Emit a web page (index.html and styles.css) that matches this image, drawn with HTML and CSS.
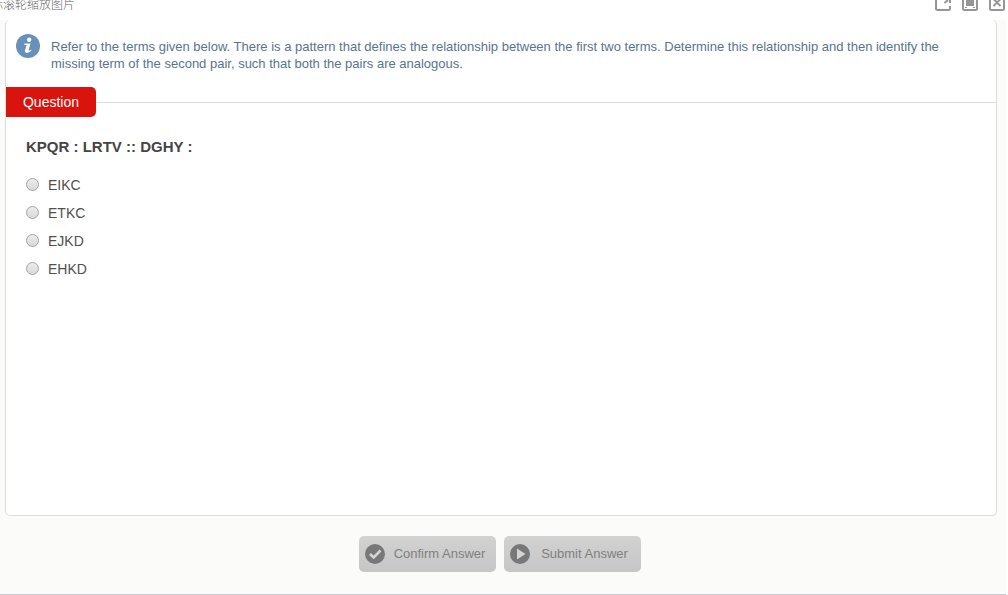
FILE: index.html
```html
<!DOCTYPE html>
<html lang="en">
<head>
<meta charset="utf-8">
<title>Question</title>
<link rel="stylesheet" href="styles.css">
</head>
<body>
<header class="topbar">
  <span class="hint" lang="zh-CN">标滚轮缩放图片</span>
  <div class="tools">
    <button class="tool" type="button" aria-label="Open in new window">
      <svg width="18" height="12" viewBox="0 0 18 12" fill="none" stroke="#969696" stroke-width="2"><path d="M2 0V8.500Q2 10 3.500 10H14.500Q16 10 16 8.500V6M10.500 3L14 0M16 0V3"/></svg>
    </button>
    <button class="tool" type="button" aria-label="Actual size">
      <svg width="18" height="12" viewBox="0 0 18 12" fill="none" stroke="#969696" stroke-width="2"><path d="M2 0V8.500Q2 10 3.500 10H14.500Q16 10 16 8.500V0"/><path d="M5 0H13V6H5Z" fill="#969696" stroke="none"/><path d="M4 7.500H6M12 7.500H14" stroke-width="1"/></svg>
    </button>
    <button class="tool" type="button" aria-label="Close">
      <svg width="18" height="12" viewBox="0 0 18 12" fill="none" stroke="#969696" stroke-width="2"><path d="M2 0V8.500Q2 10 3.500 10H14.500Q16 10 16 8.500V0M5.500 -1L12.500 6M12.500 -1L5.500 6"/></svg>
    </button>
  </div>
</header>
<main class="stage">
  <form class="quiz">
    <section class="card">
      <div class="info">
        <svg class="info-icon" width="24" height="24" viewBox="0 0 24 24"><circle cx="12" cy="12" r="12" fill="#6790bb"/><circle cx="13.200" cy="5.800" r="2.200" fill="#fff"/><path d="M8.500 9.500H14.500L12.600 16.300Q12.500 17.200 15 15.700L15.500 16.500Q12.500 19.300 10 18.800Q8.500 18.300 9 16.500L10.600 11H8.300Z" fill="#fff"/></svg>
        <p class="info-text">Refer to the terms given below. There is a pattern that defines the relationship between the first two terms. Determine this relationship and then identify the missing term of the second pair, such that both the pairs are analogous.</p>
      </div>
      <div class="divider"><h1 class="tab">Question</h1></div>
      <fieldset class="question">
        <legend class="prompt">KPQR : LRTV :: DGHY :</legend>
        <label class="option"><input class="radio" type="radio" name="answer">EIKC</label>
        <label class="option"><input class="radio" type="radio" name="answer">ETKC</label>
        <label class="option"><input class="radio" type="radio" name="answer">EJKD</label>
        <label class="option"><input class="radio" type="radio" name="answer">EHKD</label>
      </fieldset>
    </section>
    <div class="actions">
      <button class="action" type="button">
        <svg width="20" height="20" viewBox="0 0 20 20"><circle cx="10" cy="10" r="10" fill="#787878"/><path d="M5 10L8.700 13.500L15.500 6.500" fill="none" stroke="#d4d4d4" stroke-width="2.600"/></svg>
        <span class="action-label">Confirm Answer</span>
      </button>
      <button class="action" type="button">
        <svg width="20" height="20" viewBox="0 0 20 20"><circle cx="10" cy="10" r="10" fill="#787878"/><path d="M7 4.500L15.500 10L7 15.500Z" fill="#d4d4d4"/></svg>
        <span class="action-label">Submit Answer</span>
      </button>
    </div>
  </form>
</main>
</body>
</html>
```
FILE: styles.css
```css
* {
  box-sizing: border-box;
}

body {
  margin: 0;
  min-height: 100vh;
  display: flex;
  flex-direction: column;
  background: #fff;
  font-family: "Liberation Sans", Arial, "Noto Sans CJK SC", sans-serif;
}

button {
  font: inherit;
  border: 0;
  cursor: pointer;
}

.topbar {
  display: flex;
  justify-content: space-between;
  align-items: flex-start;
  height: 20px;
  padding-right: 2px;
  overflow: hidden;
}

.hint {
  margin: -5px 0 0 -9px;
  font-family: "Noto Sans CJK SC", sans-serif;
  font-weight: 300;
  font-size: 12px;
  line-height: 18px;
  color: #666;
}

.tools {
  display: flex;
  gap: 9px;
}

.tool {
  display: block;
  padding: 0;
  background: none;
}

.tool svg {
  display: block;
}

.stage {
  flex: 1;
  display: flex;
  margin-right: 2px;
  padding: 0 9px 0 5px;
  background: #fbfbfa;
  border-bottom: 1px solid #cbcbcf;
}

.quiz {
  flex: 1;
  display: flex;
  flex-direction: column;
}

.card {
  flex: 1;
  background: #fff;
  border: 1px solid #dcdcdc;
  border-top: 0;
  border-radius: 5px;
}

.info {
  display: flex;
  gap: 11px;
  padding: 14px 40px 0 10px;
}

.info-icon {
  flex: none;
}

.info-text {
  margin: 4px 0 0;
  font-size: 13px;
  line-height: 17px;
  color: #57758d;
}

.divider {
  display: flex;
  align-items: center;
  margin-top: 15px;
}

.divider::after {
  content: "";
  flex: 1;
  height: 1px;
  background: #dcdcdc;
}

.tab {
  margin: 0;
  width: 90px;
  border-radius: 0 5px 5px 0;
  background: #d9130d;
  color: #fff;
  font-size: 14px;
  font-weight: 400;
  line-height: 30px;
  text-align: center;
}

.question {
  margin: 0;
  padding: 0 20px;
  border: 0;
}

.prompt {
  padding: 20px 0 14px;
  font-size: 15px;
  font-weight: 700;
  line-height: 20px;
  color: #444;
}

.option {
  display: flex;
  align-items: center;
  gap: 9px;
  width: max-content;
  height: 28px;
  font-size: 14px;
  color: #505050;
}

.radio {
  appearance: none;
  width: 13px;
  height: 13px;
  margin: 0 0 2px;
  border: 1px solid #a4a4a4;
  border-radius: 50%;
  background: linear-gradient(#ececec, #d9d9d9);
}

.radio:checked {
  background: radial-gradient(#505050 35%, #e4e4e4 40%);
}

.actions {
  display: flex;
  justify-content: center;
  gap: 8px;
  padding: 20px 2px 22px 0;
}

.action {
  display: flex;
  align-items: center;
  width: 137px;
  height: 36px;
  padding: 0 6px;
  border-radius: 5px;
  background: linear-gradient(#d2d2d2, #c6c6c6);
  font-size: 13px;
  color: #808080;
}

.action svg {
  flex: none;
}

.action-label {
  flex: 1;
  padding: 0 0 2px 4px;
  text-align: center;
}
```
